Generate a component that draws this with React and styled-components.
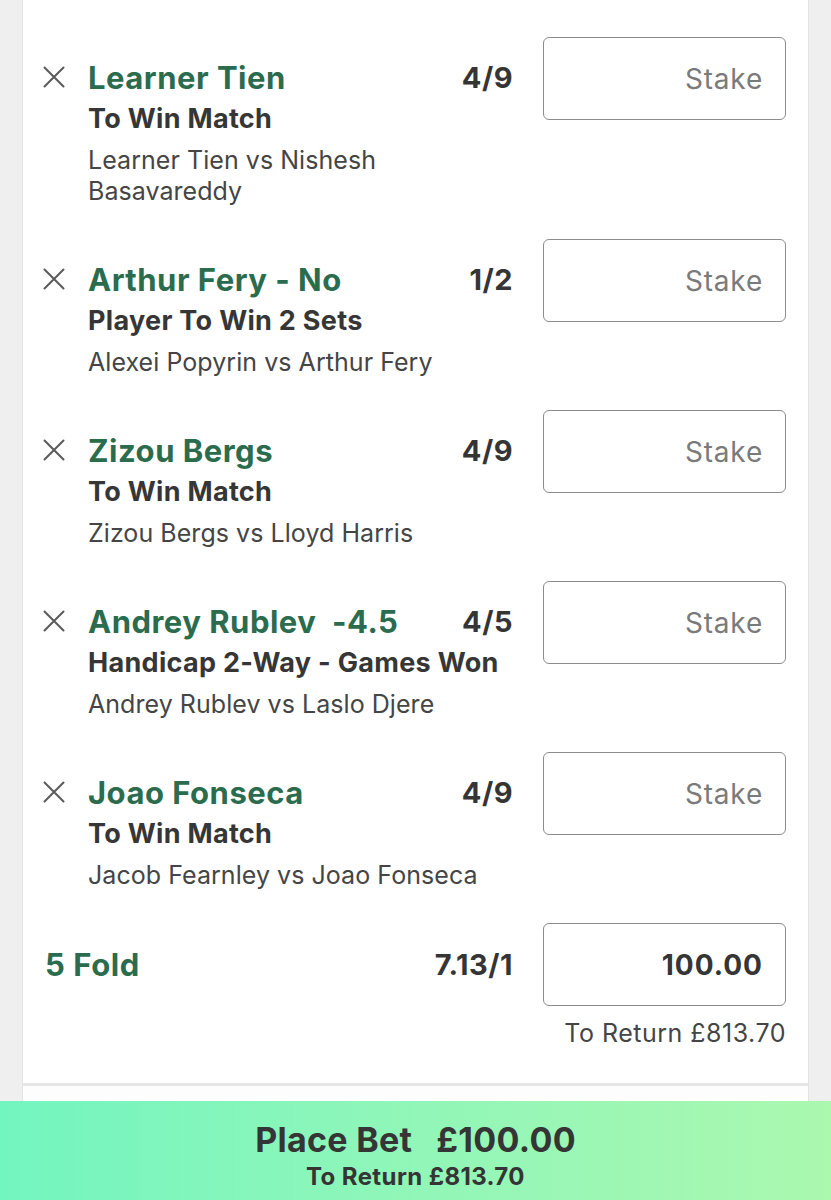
import styled, { createGlobalStyle } from "styled-components";

const GlobalStyle = createGlobalStyle`
  html, body {
    margin: 0;
    padding: 0;
    background: #efefef;
  }
  body {
    font-family: Inter, "Noto Sans", Roboto, sans-serif;
    -webkit-font-smoothing: antialiased;
  }
`;

const Page = styled.div`
  width: 831px;
  height: 1200px;
  overflow: hidden;
  display: flex;
  flex-direction: column;
  background: #efefef;
`;

const Card = styled.div`
  margin: 0 22px 0 22px;
  background: #fff;
  border-left: 1px solid #e3e3e3;
  border-right: 1px solid #e3e3e3;
  padding: 37px 0 34px;
  border-bottom: 3px solid #e6e6e6;
`;

const NextCard = styled.div`
  margin: 0 22px;
  height: 18px;
  background: #fdfdfd;
  border-left: 1px solid #e3e3e3;
  border-right: 1px solid #e3e3e3;
`;

const Row = styled.div`
  display: flex;
  align-items: flex-start;
  gap: 30px;
  padding: 0 22px 32px 20px;
`;

const Info = styled.div`
  flex: 1;
  min-width: 0;
`;

const Head = styled.div`
  display: flex;
  align-items: center;
  height: 44px;
  margin-top: 18px;
  margin-bottom: 1px;
`;

const Remove = styled.button`
  width: 22px;
  height: 22px;
  padding: 0;
  margin-right: 23px;
  border: 0;
  background: none;
  display: flex;
  color: #5a5a5a;
`;

const Selection = styled.div`
  flex: 1;
  font-size: 31px;
  font-weight: 700;
  color: #2b6c4e;
  white-space: pre;
  letter-spacing: 0.5px;
`;

const Odds = styled.div`
  font-size: 29px;
  font-weight: 700;
  color: #353535;
  letter-spacing: 0.5px;
`;

const Details = styled.div`
  padding-left: 45px;
`;

const Market = styled.div`
  font-size: 27px;
  line-height: 38px;
  font-weight: 700;
  color: #363636;
  letter-spacing: 0.3px;
`;

const Event = styled.div`
  margin-top: 7px;
  font-size: 25px;
  line-height: 31px;
  color: #454545;
  letter-spacing: 0.05px;
`;

const StakeBox = styled.div`
  box-sizing: border-box;
  width: 243px;
  height: 83px;
  flex: none;
  border: 1.5px solid #8c8c8c;
  border-radius: 6px;
  display: flex;
  align-items: center;
  justify-content: flex-end;
  padding-right: 22px;
  font-size: 28px;
  letter-spacing: ${(p) => (p.$filled ? "1px" : "0.8px")};
  font-weight: ${(p) => (p.$filled ? 700 : 400)};
  color: ${(p) => (p.$filled ? "#353535" : "#7a7a7a")};
`;

const FoldRow = styled.div`
  display: flex;
  align-items: center;
  gap: 30px;
  padding: 0 22px 0 22px;
`;

const FoldName = styled.div`
  flex: 1;
  font-size: 31px;
  font-weight: 700;
  color: #2b6c4e;
  letter-spacing: 0.6px;
`;

const Return = styled.div`
  margin-top: 12px;
  padding-right: 22px;
  text-align: right;
  font-size: 25px;
  line-height: 31px;
  color: #454545;
  letter-spacing: 0.5px;
`;

const Footer = styled.div`
  flex: none;
  height: 99px;
  box-sizing: border-box;
  padding-top: 19px;
  background: linear-gradient(90deg, #73f5c0 0%, #8ef6b9 45%, #abf8af 100%);
  display: flex;
  flex-direction: column;
  align-items: center;
  color: #353535;
  font-weight: 700;
`;

const PlaceLine = styled.div`
  display: flex;
  gap: 24px;
  font-size: 34px;
  line-height: 40px;
  letter-spacing: 0.3px;
`;

const FooterReturn = styled.div`
  margin-top: 2px;
  font-size: 24px;
  line-height: 30px;
  letter-spacing: 0.4px;
`;

function CrossIcon() {
  return (
    <svg width="22" height="22" viewBox="0 0 22 22" fill="none">
      <path
        d="M1.5 1.5 L20.5 20.5 M20.5 1.5 L1.5 20.5"
        stroke="currentColor"
        strokeWidth="2"
        strokeLinecap="round"
      />
    </svg>
  );
}

const bets = [
  {
    selection: "Learner Tien",
    odds: "4/9",
    market: "To Win Match",
    event: "Learner Tien vs Nishesh Basavareddy",
  },
  {
    selection: "Arthur Fery - No",
    odds: "1/2",
    market: "Player To Win 2 Sets",
    event: "Alexei Popyrin vs Arthur Fery",
  },
  {
    selection: "Zizou Bergs",
    odds: "4/9",
    market: "To Win Match",
    event: "Zizou Bergs vs Lloyd Harris",
  },
  {
    selection: "Andrey Rublev  -4.5",
    odds: "4/5",
    market: "Handicap 2-Way - Games Won",
    event: "Andrey Rublev vs Laslo Djere",
  },
  {
    selection: "Joao Fonseca",
    odds: "4/9",
    market: "To Win Match",
    event: "Jacob Fearnley vs Joao Fonseca",
  },
];

export default function App() {
  return (
    <>
      <GlobalStyle />
      <Page>
        <Card>
          {bets.map((bet, i) => (
            <Row key={i}>
              <Info>
                <Head>
                  <Remove aria-label="Remove selection">
                    <CrossIcon />
                  </Remove>
                  <Selection>{bet.selection}</Selection>
                  <Odds>{bet.odds}</Odds>
                </Head>
                <Details>
                  <Market>{bet.market}</Market>
                  <Event>{bet.event}</Event>
                </Details>
              </Info>
              <StakeBox>Stake</StakeBox>
            </Row>
          ))}
          <FoldRow>
            <FoldName>5 Fold</FoldName>
            <Odds>7.13/1</Odds>
            <StakeBox $filled>100.00</StakeBox>
          </FoldRow>
          <Return>To Return £813.70</Return>
        </Card>
        <NextCard />
        <Footer>
          <PlaceLine>
            <span>Place Bet</span>
            <span>£100.00</span>
          </PlaceLine>
          <FooterReturn>To Return £813.70</FooterReturn>
        </Footer>
      </Page>
    </>
  );
}
